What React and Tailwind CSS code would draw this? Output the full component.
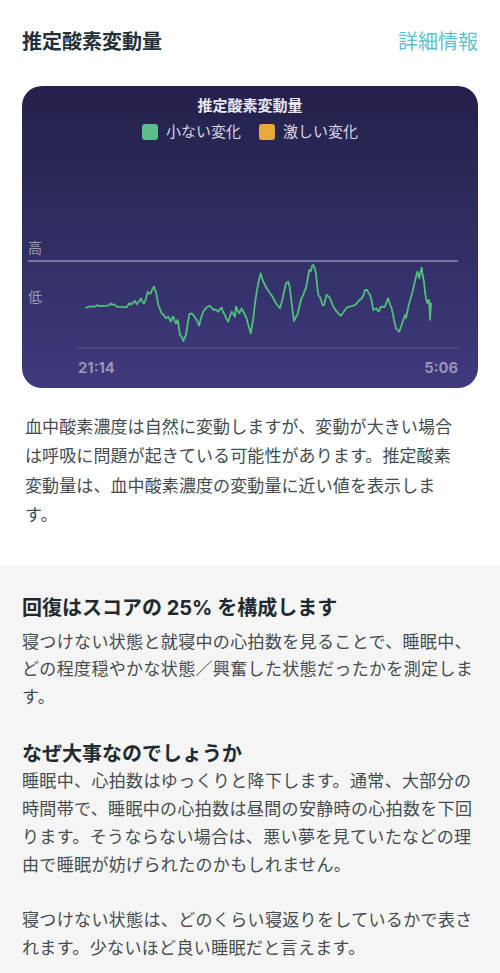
import React from 'react';

const points = [
  [86, 307.7], [90, 306.5], [95, 306.7], [97, 305.2], [99, 306], [108.3, 305.7], [110.7, 303.3], [112, 305],
  [114, 304.2], [116.7, 306.7], [126.7, 307.3], [129.3, 303.3], [131, 304.5], [133, 302.5], [135, 301],
  [136.7, 304.3], [139, 301.5], [141, 298.3], [142.5, 302], [144, 303.3], [145.5, 300], [147.7, 291.7],
  [149, 293.5], [150.7, 293.3], [152.5, 289], [154, 286.7], [155, 290], [156, 291.7], [158.3, 305],
  [160, 309], [161.7, 313.3], [164, 315.5], [166, 318.3], [168.3, 316.7], [170.7, 321.7], [172, 318],
  [173.3, 316.7], [175, 322], [176, 323.3], [177.7, 320], [179, 328], [180, 335], [181.5, 336.5],
  [183.3, 341], [184.5, 338], [186, 335], [188, 322], [189.3, 314.3], [191.7, 313.3], [194, 316],
  [196.7, 320], [198, 323], [199, 325.7], [201, 318], [203.3, 311.7], [206, 308], [209.3, 305.7],
  [211, 307], [213.3, 310], [215.5, 309.5], [218.3, 311.7], [220, 309], [221.7, 307.7], [223, 312],
  [225, 315], [226.5, 319], [228.3, 321.7], [230, 316], [231.7, 311.7], [233.5, 314], [235, 316.7],
  [236, 306.7], [237.5, 310], [239.3, 313.3], [241.7, 308.3], [243.5, 312], [245, 315], [246.5, 318],
  [248.3, 325], [250.7, 333.3], [252, 326], [253.3, 318.3], [255, 303], [257.3, 288.3], [259, 280],
  [260.7, 273.3], [262, 278], [263.3, 281.7], [265, 285], [266.7, 288.3], [268, 290], [270, 293.3],
  [271.5, 295], [273.3, 298.3], [275, 301.7], [277.3, 305], [279, 307], [280, 308.3], [281.5, 303],
  [282.7, 298.3], [284.5, 290], [286, 283.3], [288.3, 281.7], [289.5, 286], [290.7, 295], [292.5, 310],
  [294, 321], [295.5, 318], [297.3, 315], [299, 308], [300, 304.3], [301.5, 298], [303.3, 295],
  [304.5, 291], [306, 288.3], [307.5, 280], [309.3, 270], [311, 271], [312, 266], [313.3, 265],
  [314.5, 268], [316, 273.3], [317, 284], [318.3, 295], [320, 297], [322.5, 305], [324, 305],
  [326.5, 295], [329.3, 297], [331.5, 302], [333.3, 306.7], [335, 309], [336.7, 311.7], [339, 314],
  [340.7, 315.7], [343, 313], [346.7, 307.7], [350, 306.5], [353.3, 305.7], [355, 305], [356.7, 303.3],
  [358.5, 301], [361.7, 298.3], [363.5, 295], [365, 290], [367.3, 290], [368.5, 293], [370, 295],
  [371.5, 300], [373.3, 310], [375, 309], [376.7, 308.3], [378, 311.5], [379.3, 311], [380.5, 307],
  [381.7, 306.7], [383.5, 307], [385, 306.7], [386.5, 302], [388.3, 298.3], [389.2, 302], [390, 304.3],
  [391.5, 308], [392.7, 313.3], [394, 320], [396, 328.3], [397.5, 330], [399.3, 331.7], [400.5, 328],
  [402.7, 321.7], [404, 318], [405, 315], [406, 318], [407.3, 311.7], [409, 304], [410.7, 298.3],
  [412.5, 292], [414, 285], [415.5, 279], [417.3, 271.7], [418.5, 275], [419.3, 278.3], [420.5, 272],
  [421.7, 267.7], [422.8, 276], [424, 281.7], [425, 292], [426, 298.3], [427.3, 303.3], [428.2, 300.5],
  [429, 300], [429.7, 310], [430, 320], [430.6, 310], [431, 303.3],
];

const Chart = () => {
  const d = points.map((p, i) => `${i === 0 ? 'M' : 'L'}${p[0]} ${p[1]}`).join(' ');
  return (
    <svg width="456" height="214" viewBox="22 142 456 214" className="block">
      <text x="28" y="253" fontSize="14" fill="#9d9ab9">高</text>
      <line x1="28" y1="261" x2="458" y2="261" stroke="#8e8bb0" strokeWidth="1.5" />
      <text x="28" y="302" fontSize="14" fill="#9d9ab9">低</text>
      <line x1="78" y1="348" x2="458" y2="348" stroke="#5e5a8e" strokeWidth="1" />
      <path d={d} fill="none" stroke="#4fc07c" strokeWidth="1.8" strokeLinejoin="round" strokeLinecap="round" />
    </svg>
  );
};

export default function App() {
  return (
    <div className="w-[500px] min-h-[973px] bg-white font-['Inter','Noto_Sans_CJK_JP',sans-serif]">
      {/* ヘッダー */}
      <div className="flex items-center justify-between px-[22px] pt-[28px]">
        <h1 className="text-[20px] leading-[28px] font-bold text-[#253038]">推定酸素変動量</h1>
        <span className="text-[20px] leading-[28px] text-[#62bfcb]">詳細情報</span>
      </div>

      {/* グラフカード */}
      <div className="mx-[22px] mt-[30px] rounded-[20px] bg-linear-to-b from-[#23214a] to-[#3f3a7d] pt-[10px] pb-[8px]">
        <div className="text-center text-[15px] leading-[20px] font-bold text-[#e9e7f2]">推定酸素変動量</div>
        <div className="mt-[6px] flex items-center justify-center gap-[18px] text-[15px] leading-[20px] text-[#d9d7e8]">
          <div className="flex items-center gap-[8px]">
            <span className="w-[16px] h-[16px] rounded-[3px] bg-[#5cbd8a]" />
            <span>小ない変化</span>
          </div>
          <div className="flex items-center gap-[8px]">
            <span className="w-[16px] h-[16px] rounded-[3px] bg-[#e8a93a]" />
            <span>激しい変化</span>
          </div>
        </div>
        <Chart />
        <div className="flex justify-between pl-[56px] pr-[20px] text-[15px] leading-[24px] font-semibold text-[#9e9bba]">
          <span>21:14</span>
          <span>5:06</span>
        </div>
      </div>

      <p className="ml-[25px] mt-[25px] w-[440px] text-[17px] leading-[29.4px] tracking-[0.1px] text-[#454c50]">
        血中酸素濃度は自然に変動しますが、変動が大きい場合は呼吸に問題が起きている可能性があります。推定酸素変動量は、血中酸素濃度の変動量に近い値を表示します。
      </p>

      {/* 説明セクション */}
      <div className="mt-[35px] bg-[#f5f5f5] px-[22px] pt-[28px] pb-[20px]">
        <h2 className="text-[20px] leading-[28px] font-bold text-[#1f2a30]">回復はスコアの 25% を構成します</h2>
        <p className="mt-[7px] text-[17px] leading-[27.6px] tracking-[0.35px] text-[#454c50]">
          寝つけない状態と就寝中の心拍数を見ることで、睡眠中、どの程度穏やかな状態／興奮した状態だったかを測定します。
        </p>

        <h2 className="mt-[29px] text-[20px] leading-[28px] font-bold text-[#1f2a30]">なぜ大事なのでしょうか</h2>
        <p className="text-[17px] leading-[27.8px] tracking-[0.35px] text-[#454c50]">
          睡眠中、心拍数はゆっくりと降下します。通常、大部分の時間帯で、睡眠中の心拍数は昼間の安静時の心拍数を下回ります。そうならない場合は、悪い夢を見ていたなどの理由で睡眠が妨げられたのかもしれません。
        </p>
        <p className="mt-[27.8px] text-[17px] leading-[27.8px] tracking-[0.35px] text-[#454c50]">
          寝つけない状態は、どのくらい寝返りをしているかで表されます。少ないほど良い睡眠だと言えます。
        </p>
      </div>
    </div>
  );
}
